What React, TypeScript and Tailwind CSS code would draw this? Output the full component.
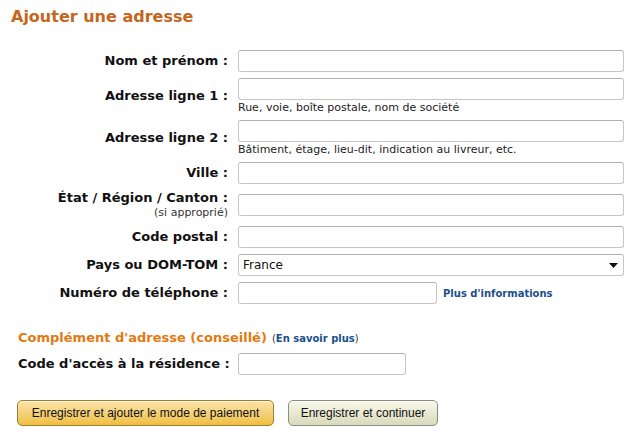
import { useState } from 'react'

type Row = {
  label: string
  sub?: string
  hint?: string
  focus?: boolean
}

const rows: Row[] = [
  { label: 'Nom et prénom :' },
  { label: 'Adresse ligne 1 :', hint: 'Rue, voie, boîte postale, nom de société' },
  { label: 'Adresse ligne 2 :', hint: 'Bâtiment, étage, lieu-dit, indication au livreur, etc.', focus: true },
  { label: 'Ville :' },
  { label: 'État / Région / Canton :', sub: '(si approprié)' },
  { label: 'Code postal :' },
]

const inputCls =
  'block h-[22px] rounded-[3px] border border-[#c6c6c6] border-t-[#b0b0b0] bg-white px-1 text-[12px] outline-none'

export default function App() {
  const [pays, setPays] = useState('France')

  return (
    <div className="min-h-screen bg-white font-['DejaVu_Sans',Verdana,sans-serif] text-[#111]">
      {/* ── Titre ── */}
      <h1 className="pl-[11px] pt-[6px] text-[16px] font-bold leading-[22px] text-[#c4661b]">
        Ajouter une adresse
      </h1>

      {/* ── Formulaire principal ── */}
      <div className="mt-[22px] flex flex-col gap-[6px]">
        {rows.map(r => (
          <div key={r.label} className="flex items-center">
            <div className="w-[228px] text-right">
              <div className="text-[13px] font-bold leading-[16px]">{r.label}</div>
              {r.sub && <div className="text-[11px] leading-[14px] text-[#333]">{r.sub}</div>}
            </div>
            <div className="ml-[10px]">
              <input
                className={
                  inputCls +
                  ' w-[386px]' +
                  (r.focus ? ' border-[#7fa5cf] border-t-[#6b93c4]' : '')
                }
              />
              {r.hint && (
                <div className="mt-[1px] h-[13px] text-[11px] leading-[13px] text-[#222]">{r.hint}</div>
              )}
            </div>
          </div>
        ))}

        {/* Pays */}
        <div className="flex items-center">
          <div className="w-[228px] text-right text-[13px] font-bold leading-[16px]">Pays ou DOM-TOM :</div>
          <div className="relative ml-[10px]">
            <select
              value={pays}
              onChange={e => setPays(e.target.value)}
              className={inputCls + ' w-[386px] appearance-none text-[12px] text-[#111]'}
            >
              <option>France</option>
              <option>Belgique</option>
              <option>Suisse</option>
            </select>
            <svg className="pointer-events-none absolute right-[6px] top-[9px]" width="9" height="5" viewBox="0 0 9 5">
              <path d="M0 0h9L4.5 5z" fill="#111" />
            </svg>
          </div>
        </div>

        {/* Téléphone */}
        <div className="flex items-center">
          <div className="w-[228px] text-right text-[13px] font-bold leading-[16px]">Numéro de téléphone :</div>
          <input className={inputCls + ' ml-[10px] w-[199px]'} />
          <a href="#" className="ml-[6px] text-[10px] font-bold text-[#1a4f8b]">
            Plus d'informations
          </a>
        </div>
      </div>

      {/* ── Complément ── */}
      <div className="mt-[24px] pl-[18px]">
        <div className="flex items-baseline">
          <span className="text-[13px] font-bold text-[#e47911]">Complément d'adresse (conseillé)</span>
          <span className="ml-[5px] text-[10px] text-[#333]">
            (<a href="#" className="font-bold text-[#1a4f8b]">En savoir plus</a>)
          </span>
        </div>
        <div className="mt-[5px] flex items-center">
          <div className="w-[210px] whitespace-nowrap text-right text-[13px] font-bold leading-[16px]">
            Code d'accès à la résidence :
          </div>
          <input className={inputCls + ' ml-[10px] w-[168px]'} />
        </div>
      </div>

      {/* ── Boutons ── */}
      <div className="mt-[25px] flex gap-[14px] pl-[17px] font-['Liberation_Sans',Arial,sans-serif]">
        <button className="h-[26px] w-[257px] rounded-[5px] border border-[#9c7e31] bg-gradient-to-b from-[#f9e3a8] to-[#f0bf3d] text-[12px] text-[#111] shadow-[inset_0_1px_0_#fff4d6]">
          Enregistrer et ajouter le mode de paiement
        </button>
        <button className="h-[26px] w-[150px] rounded-[5px] border border-[#8c8c7a] bg-gradient-to-b from-[#f8f8e8] to-[#d9d9bd] text-[12px] text-[#111] shadow-[inset_0_1px_0_#ffffff]">
          Enregistrer et continuer
        </button>
      </div>
    </div>
  )
}
